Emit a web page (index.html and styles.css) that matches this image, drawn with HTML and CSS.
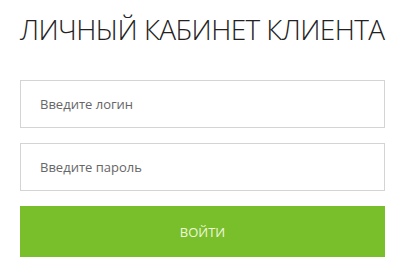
FILE: index.html
```html
<!DOCTYPE html>
<html lang="ru">
<head>
<meta charset="utf-8">
<title>Личный кабинет клиента</title>
<link rel="stylesheet" href="styles.css">
</head>
<body>
<main class="page">
  <h1 class="title">ЛИЧНЫЙ КАБИНЕТ КЛИЕНТА</h1>
  <form class="form">
    <input class="field" type="text" placeholder="Введите логин">
    <input class="field" type="password" placeholder="Введите пароль">
    <button class="submit" type="button">ВОЙТИ</button>
  </form>
</main>
</body>
</html>
```
FILE: styles.css
```css
html, body {
  margin: 0;
  padding: 0;
  background: #ffffff;
}
.page {
  width: 365px;
  padding: 10px 16px 0 20px;
  font-family: "Open Sans", "Liberation Sans", sans-serif;
}
.title {
  margin: 0 0 32px 0;
  font-size: 28px;
  line-height: 38px;
  font-weight: 300;
  letter-spacing: -0.6px;
  color: #222222;
  white-space: nowrap;
}
.form {
  display: flex;
  flex-direction: column;
  gap: 15px;
}
.field {
  box-sizing: border-box;
  width: 100%;
  height: 48px;
  margin: 0;
  padding: 0 0 0 19px;
  border: 1px solid #d4d4d4;
  border-radius: 0;
  background: #ffffff;
  font-family: "Open Sans", "Liberation Sans", sans-serif;
  font-size: 13px;
  color: #444;
  outline: none;
}
.field::placeholder {
  color: #666666;
  opacity: 1;
}
.submit {
  box-sizing: border-box;
  width: 100%;
  height: 51px;
  margin: 0;
  border: 0;
  border-radius: 0;
  background: #79be2b;
  color: #eef9dc;
  font-family: "Open Sans", "Liberation Sans", sans-serif;
  font-size: 13px;
  text-transform: uppercase;
  cursor: pointer;
}
```
